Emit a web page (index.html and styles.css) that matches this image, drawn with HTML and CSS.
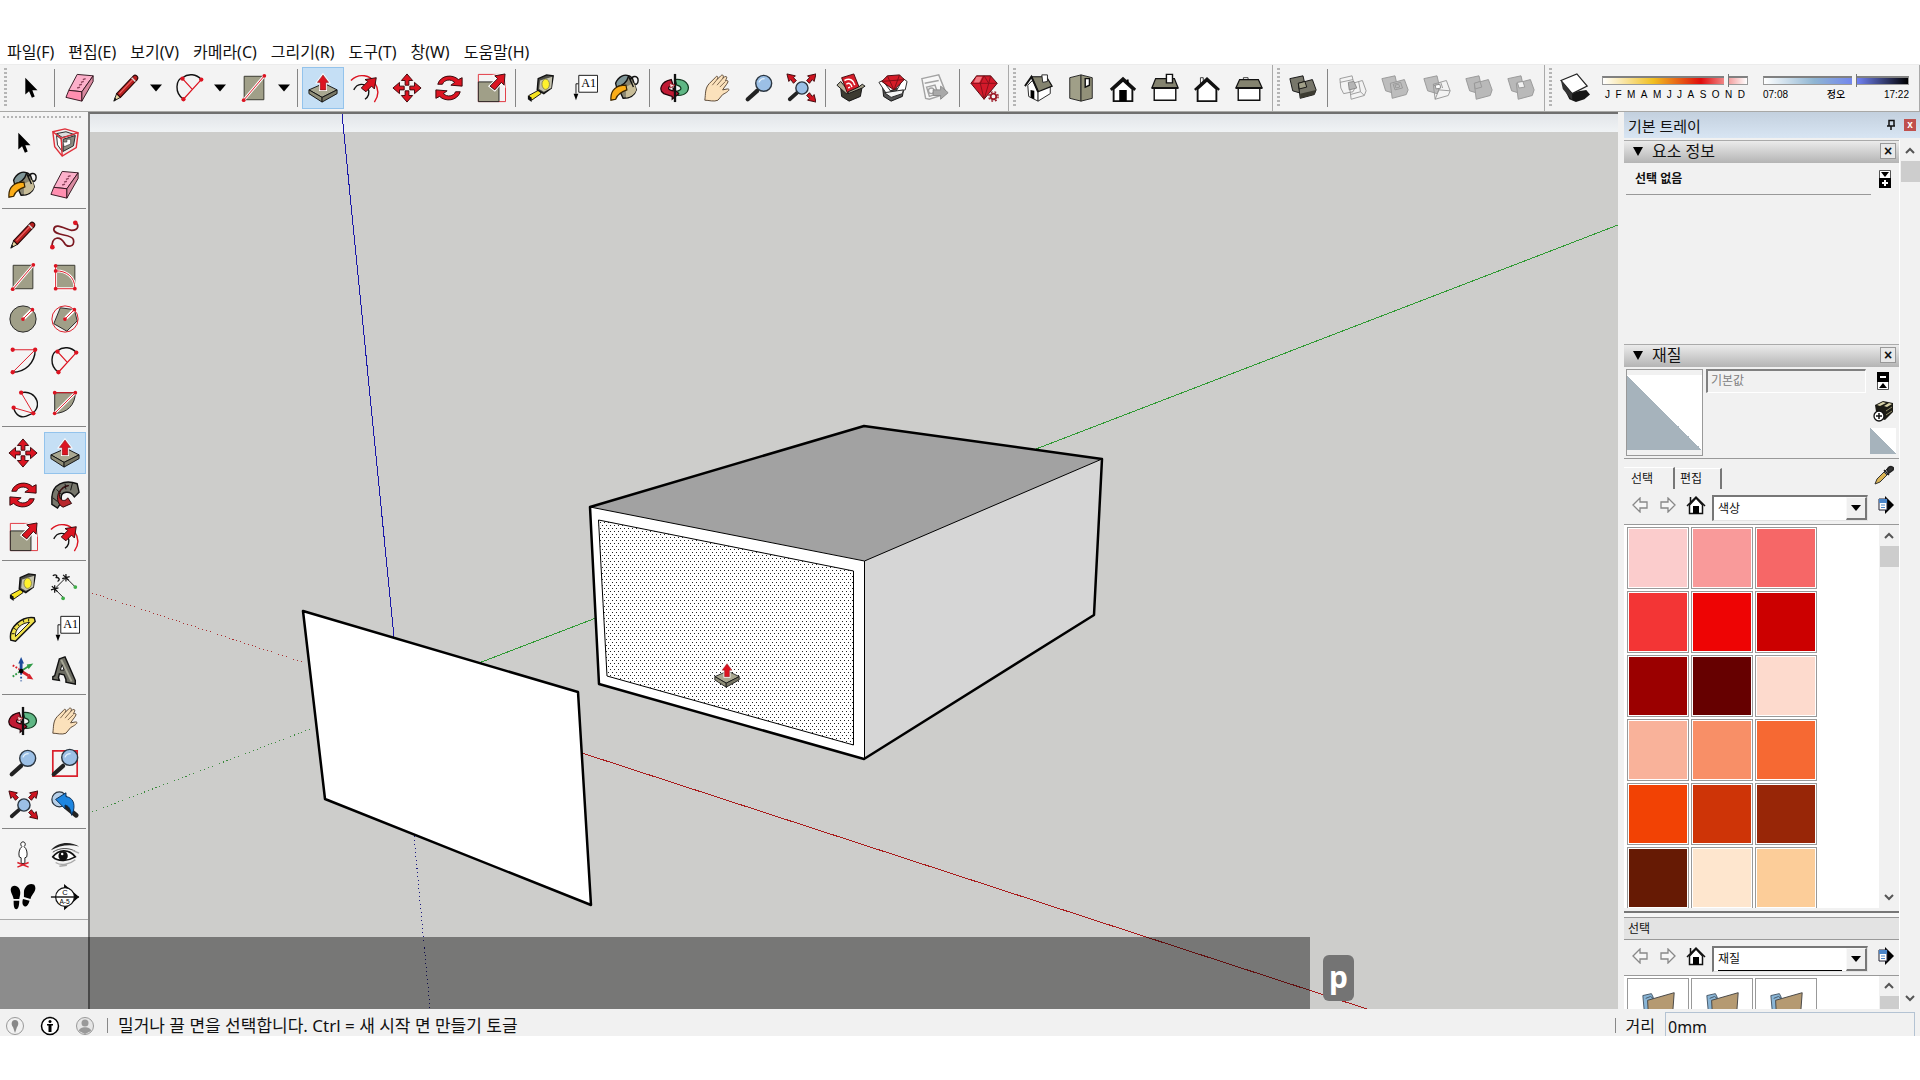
FILE: index.html
```html
<!DOCTYPE html>
<html lang="ko">
  <head>
    <meta charset="utf-8">
    <title>SketchUp</title>
    <link rel="stylesheet" href="styles.css">
  </head>
  <body>
    <!-- icon set -->
    <svg class="defs" width="0" height="0" aria-hidden="true">
      <defs>
        <symbol id="i-select" viewBox="0 0 32 32"><path d="M11 5V23L15 19.500L18 26.500L21 25L18.500 18.500H24Z" fill="#000"/></symbol>
        <symbol id="i-component" viewBox="0 0 32 32"><path d="M3 4L16 1L30 5L28 21L13 30L5 20Z" fill="#eee"/><path d="M14 12L27 8L25 19L14 25Z" fill="#8a8a80" stroke="#222"/><path d="M7 6L17 4L26 7L13 10Z" fill="#ddd" stroke="#222"/><path d="M7 8L12 12L13 25L8 18Z" fill="#fff" stroke="#222"/><path d="M14 15H18V12H22V17L15 20Z" fill="#fff" stroke="#222" stroke-width=".6"/><path d="M3 4L16 1L30 5L28 21L13 30L5 20ZM3 4L12 11L30 5M12 11L13 30" fill="none" stroke="#e0303a" stroke-width="1.500"/></symbol>
        <symbol id="i-paint" viewBox="0 0 32 32"><path d="M10 8C13 2 21 1 24 6L28 18C26 25 20 27 14 27L8 14Z" fill="#8a8672" stroke="#111" stroke-width="1.500"/><path d="M17 15L26 10L28 18C26 23 21 26 17 26Z" fill="#c8bd98"/><path d="M6 11C9 3 16 1 20 3C18 10 13 14 7 15Z" fill="#7f9698" stroke="#111" stroke-width="1.500"/><path d="M22 7C24 2 30 3 30 8C30 12 27 13 26 11M20 4L25 15" fill="none" stroke="#111" stroke-width="1.500"/><path d="M17 13C8 13 0 17 1 29L6 28C8 22 13 20 18 18Z" fill="#fbad18" stroke="#3a2500" stroke-width="1.300"/></symbol>
        <symbol id="i-eraser" viewBox="0 0 32 32"><path d="M13 1.500L30 3L18 20L4 18.500Z" fill="#fcb0ca" stroke="#30151e"/><path d="M4 18.500L18 20V30L1 26Z" fill="#ff8fb0" stroke="#30151e"/><path d="M30 3V9L18 30V20Z" fill="#d98aa0" stroke="#30151e"/><path d="M13 16L16 15M15 13L18 12M17 10L20 9M19 7L22 6" stroke="#8a4058" stroke-width="1.500"/></symbol>
        <symbol id="i-pencil" viewBox="0 0 32 32"><path d="M3 30L6 22L10 26Z" fill="#e8d5a0" stroke="#111"/><path d="M3 30L4 26L6 28Z" fill="#111"/><path d="M6 22L24 3C26 1 30 4 28 7L10 26Z" fill="#b8201f" stroke="#2a0808" stroke-width="1.200"/><path d="M22 5L26 9" stroke="#ddd" stroke-width="1.500"/><path d="M9 22L23 7" stroke="#e66" stroke-width="1.200"/></symbol>
        <symbol id="i-free" viewBox="0 0 32 32"><path d="M2 30C2 16 11 18 15 24C18 30 27 29 25 21C23 14 5 18 4 10C5 2 17 10 23 11C31 11 31 5 27 3" fill="none" stroke="#7b1820" stroke-width="1.800"/><circle cx="2.500" cy="29" r="2.500" fill="#dc1421"/><circle cx="27" cy="3" r="2.500" fill="#dc1421"/></symbol>
        <symbol id="i-rect" viewBox="0 0 32 32"><path d="M5.500 3.500H26.500V28.500H5.500Z" fill="#a09f88" stroke="#33332b"/><path d="M5 29L27 3" stroke="#fff" stroke-width="3"/><path d="M5 29L27 3" stroke="#dc1421"/><circle cx="5" cy="29" r="2" fill="#dc1421"/><circle cx="27" cy="3" r="2" fill="#dc1421"/></symbol>
        <symbol id="i-rrect" viewBox="0 0 32 32"><path d="M6 3.500H26.500V28.500H6Z" fill="#a09f88" stroke="#33332b"/><path d="M6 4V28.500H26.500C27 16 17 9 6 9.500" fill="none" stroke="#fff" stroke-width="3"/><path d="M6 4V28.500H26.500C27 16 17 9 6 9.500" fill="none" stroke="#dc1421"/><g fill="#dc1421"><circle cx="6" cy="4" r="2"/><circle cx="6" cy="9.500" r="2"/><circle cx="6" cy="28.500" r="2"/><circle cx="26.500" cy="28.500" r="2"/></g></symbol>
        <symbol id="i-circle" viewBox="0 0 32 32"><circle cx="16" cy="16" r="14" fill="#a09f88" stroke="#222"/><path d="M16 16L26 6" stroke="#fff" stroke-width="4"/><path d="M16 16L26 6" stroke="#dc1421"/><circle cx="16" cy="16" r="2" fill="#dc1421"/><circle cx="26" cy="6" r="2" fill="#dc1421"/></symbol>
        <symbol id="i-poly" viewBox="0 0 32 32"><path d="M11 4L26 6L29 18L18 29L4 21Z" fill="#a09f88" stroke="#222"/><circle cx="16" cy="16" r="14" fill="none" stroke="#dc1421"/><path d="M16 16L26 6" stroke="#fff" stroke-width="4"/><path d="M16 16L26 6" stroke="#dc1421"/><circle cx="16" cy="16" r="2" fill="#dc1421"/><circle cx="26" cy="6" r="2" fill="#dc1421"/></symbol>
        <symbol id="i-arc1" viewBox="0 0 32 32"><path d="M29 4C29 18 18 28 5 28" fill="none" stroke="#111" stroke-width="1.500"/><path d="M5 4H29L5 28" fill="none" stroke="#dc1421"/><g fill="#dc1421"><circle cx="5" cy="4" r="2.300"/><circle cx="29" cy="4" r="2.300"/><circle cx="5" cy="28" r="2.300"/></g></symbol>
        <symbol id="i-arc2" viewBox="0 0 32 32"><path d="M9 28C-1 21 1 7 8 5C14 0 23 1 28 7" fill="none" stroke="#111" stroke-width="1.500"/><path d="M8 6L18 17M28 7L9 28" fill="none" stroke="#dc1421" stroke-width="1.300"/><g fill="#dc1421"><circle cx="8" cy="6" r="2.300"/><circle cx="28" cy="7" r="2.300"/><circle cx="9" cy="28" r="2.300"/></g></symbol>
        <symbol id="i-arc3" viewBox="0 0 32 32"><path d="M14 5C31 1 39 23 22 29C15 33 8 30 6 21" fill="none" stroke="#111" stroke-width="1.500"/><path d="M14 5L27 27L6 21" fill="none" stroke="#dc1421"/><g fill="#dc1421"><circle cx="14" cy="5" r="2.300"/><circle cx="27" cy="27" r="2.300"/><circle cx="6" cy="21" r="2.300"/></g></symbol>
        <symbol id="i-pie" viewBox="0 0 32 32"><path d="M5 5H27C27 18 18 27 5 27Z" fill="#a09f88" stroke="#222"/><path d="M5 27L27 5" stroke="#fff" stroke-width="3"/><path d="M5 5H27L5 27" fill="none" stroke="#dc1421"/><g fill="#dc1421"><circle cx="5" cy="5" r="2"/><circle cx="27" cy="5" r="2"/><circle cx="5" cy="27" r="2"/></g></symbol>
        <symbol id="i-move" viewBox="0 0 32 32"><g fill="#dc1421" stroke="#3d080b"><path id="mv" d="M16 1L22 8H18V13H14V8H10Z"/><use href="#mv" transform="rotate(90 16 16)"/><use href="#mv" transform="rotate(180 16 16)"/><use href="#mv" transform="rotate(270 16 16)"/></g></symbol>
        <symbol id="i-push" viewBox="0 0 32 32"><path d="M1 18L17 11L31 18L15 26Z" fill="#a9a891" stroke="#111"/><path d="M1 18L15 26V31L1 22Z" fill="#8f8e78" stroke="#111"/><path d="M15 26L31 18V22L15 31Z" fill="#777664" stroke="#111"/><path d="M16 2L22 10H19V18H13V10H10Z" fill="#dc1421" stroke="#fff" stroke-width="2.500"/><path d="M16 2L22 10H19V18H13V10H10Z" fill="#dc1421" stroke="#6d0a10" stroke-width=".5"/></symbol>
        <symbol id="i-rotate" viewBox="0 0 32 32"><g fill="#dc1421" stroke="#30080a"><path id="rt" d="M4 12C7 2 20 1 26 7L30 5L30 14L18 13L22 10C18 6 11 7 9 12Z"/><use href="#rt" transform="rotate(180 16 16)"/></g></symbol>
        <symbol id="i-follow" viewBox="0 0 32 32"><path d="M2 18C3 5 15 -1 29 4L31 13L26 18C21 10 12 13 12 18L12 24L8 30L2 26Z" fill="#77776c" stroke="#111" stroke-width="1.500"/><path d="M3 19L8 23M7 10L12 15M16 4L17 10M24 3L22 11" stroke="#111"/><path d="M20 6C12 8 8 14 11 20C14 23 17 22 19 19L23 25L14 29C8 26 7 20 9 14C12 8 16 6 20 6Z" fill="#b8262b" stroke="#220406"/></symbol>
        <symbol id="i-scale" viewBox="0 0 32 32"><path d="M2.500 1.500H31.500V30.500H2.500Z" fill="none" stroke="#e0303a"/><path d="M2.500 9.500H24.500V30.500H2.500Z" fill="#a09f88" stroke="#222"/><path d="M31 1L30 13L27 10L20 18L15 14L23 6L20 3Z" fill="#dc1421" stroke="#fff" stroke-width="3"/><path d="M31 1L30 13L27 10L20 18L15 14L23 6L20 3Z" fill="#dc1421" stroke="#30080a"/></symbol>
        <symbol id="i-offset" viewBox="0 0 32 32"><path d="M1 8C10 -1 22 3 26 10C31 17 31 24 26 31" fill="none" stroke="#dc1421" stroke-width="1.500"/><path d="M4 18C8 10 16 11 19 16C22 21 19 26 16 28" fill="none" stroke="#111" stroke-width="1.500"/><path d="M28 5L26 17L23 14L17 20L12 16L19 9L16 7Z" fill="#dc1421" stroke="#30080a"/></symbol>
        <symbol id="i-tape" viewBox="0 0 32 32"><path d="M3 24L14 18L16 22L6 29Z" fill="#f6e421" stroke="#111"/><path d="M2 24L6 26L6 31L2 28Z" fill="#111"/><path d="M13 6L22 2L29 3L27 16L19 22L12 18Z" fill="#4b4b45" stroke="#111" stroke-width="1.500"/><path d="M15 8L28 4L27 16L19 20L14 17Z" fill="#c4c2ae"/><ellipse cx="21" cy="12" rx="4" ry="5.500" fill="#fff22c" stroke="#8b8750"/></symbol>
        <symbol id="i-dim" viewBox="0 0 32 32"><path d="M5 18L17 6M5 18L14 27M17 6L26 15" stroke="#111" fill="none"/><path d="M2 15L8 21M14 3L20 9M5 14V22M1 19L9 17M17 2V10M13 7L21 5" stroke="#111" stroke-width="1.300"/><path d="M3 4C6 2 9 4 6 6C10 5 11 9 8 10" fill="none" stroke="#111" stroke-width="1.500"/><circle cx="14" cy="28" r="2" fill="#3fae49"/><circle cx="27" cy="16" r="2" fill="#3fae49"/></symbol>
        <symbol id="i-protractor" viewBox="0 0 32 32"><path d="M3 28C0 14 15 2 28 4L29 8L8 29Z" fill="#efe04b" stroke="#111" stroke-width="1.500"/><path d="M8 24C7 16 15 9 23 9Z" fill="#f3f3f3" stroke="#111"/><path d="M4 21L7 21M6 15L9 17M10 10L12 13M16 6L17 9M22 5L22 8" stroke="#111"/></symbol>
        <symbol id="i-text" viewBox="0 0 32 32"><path d="M11.500 2.500H31.500V20.500H11.500Z" fill="#fff" stroke="#111"/><text x="14" y="15" font-family="Liberation Serif" font-size="13">A1</text><path d="M11 11.500H8.500V22" fill="none" stroke="#111"/><path d="M6 22H11L8.500 29Z"/></symbol>
        <symbol id="i-axes" viewBox="0 0 32 32"><path d="M14 16V7" stroke="#1c4c9c" stroke-width="3"/><path d="M14 1L17 8H11Z" fill="#1c4c9c"/><path d="M14 16L22 11" stroke="#2f9b46" stroke-width="2"/><path d="M27 8L22 14L20 9Z" fill="#2f9b46"/><path d="M14 16L22 21" stroke="#d5202a" stroke-width="3"/><path d="M27 25L20 24L23 19Z" fill="#d5202a"/><path d="M5 10L12 14" stroke="#d5202a" stroke-width="2" stroke-dasharray="2 1.500"/><path d="M5 22L12 17" stroke="#2f9b46" stroke-width="2" stroke-dasharray="2 1.500"/><path d="M14 18V27" stroke="#1c4c9c" stroke-width="2" stroke-dasharray="2 2"/><circle cx="14" cy="16" r="2.500"/></symbol>
        <symbol id="i-3dtext" viewBox="0 0 32 32"><path d="M10 3L16 1L27 26V30L17 28V25L15 20L10 19L9 23L10 26L3 25V22L5 21Z" fill="#6c6c62" stroke="#111" stroke-width="1.500"/><path d="M13 9L15 15H11Z" fill="#fff" stroke="#111"/><path d="M12 4L23 27" stroke="#a7a797" stroke-width="2"/></symbol>
        <symbol id="i-orbit" viewBox="0 0 32 32"><path d="M16 7C27 6 33 13 29 20C26 24 21 24 19 24V19C24 18 23 14 18 13Z" fill="#5fb785" stroke="#12391f" stroke-width="1.300"/><path d="M12 7C1 9 -2 18 4 22L13 25V28L20 22L14 16V19C8 18 7 15 14 13Z" fill="#c01a33" stroke="#22050a" stroke-width="1.300"/><path d="M16 1V31" stroke="#111" stroke-width="2.500"/><path d="M10 11L16 13L11 16Z" fill="#f5dfdf" stroke="#a01a25"/></symbol>
        <symbol id="i-pan" viewBox="0 0 32 32"><path d="M3 29C4 22 3 16 8 11L14 5C16 2 18 4 16 7L20 3C22 1 24 3 22 6L24 4C27 3 27 5 25 8L26 8C29 8 28 10 24 15L22 18L27 17C31 17 28 20 22 23L17 29C13 31 7 29 3 29Z" fill="#fbe1bb" stroke="#554332" stroke-width="1"/><path d="M16 7L11 13M22 6L16 13M25 9L19 15" stroke="#7a624a"/></symbol>
        <symbol id="i-zoom" viewBox="0 0 32 32"><path d="M4 28L14 19" stroke="#222" stroke-width="4.500" stroke-linecap="round"/><path d="M14 18L17 16" stroke="#222" stroke-width="2"/><circle cx="21" cy="11" r="8.500" fill="#9cc0e6" stroke="#2a3540" stroke-width="1.500"/><path d="M16 10C17 7 19 6 22 6" fill="none" stroke="#e3f0fb" stroke-width="1.500"/></symbol>
        <symbol id="i-zoomwin" viewBox="0 0 32 32"><path d="M3 3H29V30H3Z" fill="none" stroke="#d9202c" stroke-width="1.800"/><path d="M4 28L14 19" stroke="#222" stroke-width="4.500" stroke-linecap="round"/><circle cx="21" cy="10" r="8.500" fill="#9cc0e6" stroke="#2a3540" stroke-width="1.500"/><path d="M16 10C17 7 19 6 22 6" fill="none" stroke="#e3f0fb" stroke-width="1.500"/></symbol>
        <symbol id="i-extents" viewBox="0 0 32 32"><path d="M4 28L12 21" stroke="#222" stroke-width="4" stroke-linecap="round"/><circle cx="17" cy="16" r="6.500" fill="#9cc0e6" stroke="#2a3540" stroke-width="1.500"/><g fill="#cf1420" stroke="#3d080b"><path d="M1 1L10 3L8 5L11 8L8 11L5 7L3 9Z"/><path d="M32 1L30 9L28 7L25 11L22 8L25 5L23 3Z"/><path d="M32 31L23 29L25 27L22 24L25 21L28 25L30 23Z"/></g></symbol>
        <symbol id="i-prev" viewBox="0 0 32 32"><path d="M17 18L28 27" stroke="#222" stroke-width="5" stroke-linecap="round"/><circle cx="10" cy="10" r="8" fill="#b6cfe8" stroke="#2a3540" stroke-width="1.300"/><path d="M6 10L17 3V7C24 8 27 14 25 22L23 27C22 20 20 17 16 16V20Z" fill="#1e86e0" stroke="#082b52"/></symbol>
        <symbol id="i-position" viewBox="0 0 32 32"><path d="M16 2C19 2 19 6 17 7C20 9 21 14 20 18L18 19V25H14V19L12 18C11 14 12 9 15 7C13 6 13 2 16 2Z" fill="#fff" stroke="#111"/><path d="M10 29L22 24M10 24L22 29" stroke="#d9202c" stroke-width="1.500"/></symbol>
        <symbol id="i-eye" viewBox="0 0 32 32"><path d="M1 11C8 2 22 1 31 7C20 4 10 6 1 11Z" fill="#222"/><path d="M3 18C9 10 20 9 27 18C20 22 9 24 3 18Z" fill="#fff" stroke="#111" stroke-width="1.800"/><circle cx="14" cy="17" r="5" fill="#111"/><circle cx="13" cy="15" r="1.300" fill="#fff"/><path d="M3 13C10 8 20 8 27 12" fill="none" stroke="#444"/><path d="M6 24C12 28 21 26 27 21M10 28L18 27M24 11L31 14" stroke="#aaa" stroke-width="1.500" fill="none"/></symbol>
        <symbol id="i-walk" viewBox="0 0 32 32"><path d="M4 5C9 2 14 7 13 13L12 18L6 18C5 13 1 9 4 5ZM6 20L12 20C12 25 11 29 9 29C6 29 6 24 6 20Z"/><path d="M28 3C22 0 17 6 17 11L17 16L24 18C25 13 32 9 28 3ZM16 18L23 20C22 24 20 27 18 26C15 25 15 21 16 18Z"/></symbol>
        <symbol id="i-section" viewBox="0 0 32 32"><path d="M15 2L23 9L31 16L23 23L15 30Z"/><circle cx="16" cy="16" r="10" fill="#fff" stroke="#111" stroke-width="1.300"/><path d="M1 16H31" stroke="#111" stroke-width="1.500"/><text x="13" y="14" font-family="Liberation Sans" font-size="8">C</text><text x="10" y="23" font-family="Liberation Sans" font-size="7">A-5</text></symbol>
        <symbol id="i-ware" viewBox="0 0 32 32"><path d="M5 16L13 19L28 14L26 25L14 30L6 25Z" fill="#3c3a30" stroke="#111"/><path d="M1 13L5 9L14 20L11 22Z" fill="#b5b09a" stroke="#111"/><path d="M6 5L19 1L25 16L12 21Z" fill="#d51c28" stroke="#43080c"/><path d="M9 8C15 5 19 8 20 13M11 12C14 10 16 11 17 15M13 16L15 15" fill="none" stroke="#fff" stroke-width="1.600"/><path d="M13 22L28 16L31 14L28 12L24 15L13 20Z" fill="#a5a18b" stroke="#111"/></symbol>
        <symbol id="i-extw" viewBox="0 0 32 32"><path d="M5 16L13 19L28 14L26 25L14 30L6 25Z" fill="#555" stroke="#111"/><path d="M1 10L5 8L14 20L9 22Z" fill="#fff" stroke="#222"/><path d="M31 9L27 6L19 20L29 18Z" fill="#fff" stroke="#222"/><path d="M4 9L10 3L23 2L28 7L17 18Z" fill="#d51c28" stroke="#43080c"/><path d="M4 9L28 7M10 3L17 18L23 2" fill="none" stroke="#7d0e15"/><path d="M7 21L27 18L26 22L14 26Z" fill="#f4f4f4" stroke="#222"/></symbol>
        <symbol id="i-layout" viewBox="0 0 32 32"><g fill="#f7f7f7" stroke="#a3a3a3" stroke-width="1.500"><path d="M2 6L20 2L28 22L10 28L6 27Z"/><path d="M5 11L20 8M7 15L16 13L19 22L10 25Z"/><circle cx="12" cy="19" r="3"/></g><path d="M14 18H22V14L30 21L22 28V24H14Z" fill="#a9a9a9" stroke="#888"/></symbol>
        <symbol id="i-ruby" viewBox="0 0 32 32"><path d="M1 11L7 3H22L29 11L15 28Z" fill="#d3192a" stroke="#4b080e"/><path d="M1 11H29M7 3L11 11L15 28L20 11L22 3M11 11L15 3L20 11" fill="none" stroke="#84101a"/><path d="M7 4L13 4L10 10L4 10Z" fill="#f27780"/><circle cx="25" cy="25" r="3" fill="#f2f2f2" stroke="#9b1b28" stroke-width="2"/><circle cx="25" cy="25" r="5" fill="none" stroke="#9b1b28" stroke-width="1.500" stroke-dasharray="2 2"/></symbol>
        <symbol id="i-iso" viewBox="0 0 32 32"><path d="M4 13L9 8L15 17V30L5 25Z" fill="#fff" stroke="#222"/><path d="M15 19L28 12V22L15 30Z" fill="#fff" stroke="#222"/><path d="M8 4L24 4L30 14L15 20Z" fill="#84836f" stroke="#111" stroke-width="1.300"/><path d="M1 14L8 4L15 20" fill="none" stroke="#111" stroke-width="2"/><path d="M7 18L11 19V28L7 26Z"/><path d="M19 2H25V9L20 10Z" fill="#fff" stroke="#222"/></symbol>
        <symbol id="i-top" viewBox="0 0 32 32"><path d="M4 5L16 2V30L4 27Z" fill="#a09f88" stroke="#222"/><path d="M16 2L28 5V27L16 30Z" fill="#929179" stroke="#222"/><path d="M20.500 6H25V13L20.500 15Z" fill="#fff" stroke="#111" stroke-width="1.500"/></symbol>
        <symbol id="i-front" viewBox="0 0 32 32"><path d="M6 17L16 8L26 17V30H6Z" fill="#fff" stroke="#111" stroke-width="2"/><path d="M3 18L16 6L29 18" fill="none" stroke="#111" stroke-width="3"/><path d="M12 18H20V30H12ZM20 7H22V12H20Z"/></symbol>
        <symbol id="i-right" viewBox="0 0 32 32"><path d="M4.500 16H27.500V29H4.500Z" fill="#fff" stroke="#111" stroke-width="1.500"/><path d="M6 6H26L30 16H2Z" fill="#84836f" stroke="#111" stroke-width="1.300"/><path d="M2 16H30" stroke="#111" stroke-width="2"/><path d="M17.500 1.500H24V10.500H17.500Z" fill="#fff" stroke="#111" stroke-width="1.500"/></symbol>
        <symbol id="i-back" viewBox="0 0 32 32"><path d="M9 5H12V12H9Z" fill="#fff" stroke="#333"/><path d="M6 17L16 8L26 17V30H6Z" fill="#fff" stroke="#111" stroke-width="2"/><path d="M3 18L16 6L29 18" fill="none" stroke="#111" stroke-width="2.500"/></symbol>
        <symbol id="i-left" viewBox="0 0 32 32"><path d="M10 5H15V7H10Z" fill="#fff" stroke="#333"/><path d="M4.500 16H27.500V29H4.500Z" fill="#fff" stroke="#111" stroke-width="1.500"/><path d="M6 7H26L30 16H2Z" fill="#84836f" stroke="#111" stroke-width="1.300"/><path d="M2 16H30" stroke="#111" stroke-width="2"/></symbol>
        <symbol id="i-shell" viewBox="0 0 32 32"><path d="M2 6L16 3L19 16L15 22L5 19Z" fill="#77766a" stroke="#111"/><path d="M11 11L26 7L30 18L28 23L13 27Z" fill="#77766a" stroke="#111"/><path d="M13 22L30 18L28 23L13 27Z" fill="#3c3b31"/><path d="M11 11L18 9L20 15L12 17Z" fill="#a09f88" stroke="#111"/></symbol>
        <symbol id="i-s1" viewBox="0 0 32 32"><g fill="none" stroke="#999"><path d="M2 6L15 3L18 16L16 20L6 22L3 16Z"/><path d="M12 12L26 8L30 19L28 24L14 28ZM2 10L16 7M22 9L24 20L13 23M24 20L28 24"/></g><path d="M11 10L17 9L20 16L12 18Z" fill="#b5b5b5" stroke="#888"/></symbol>
        <symbol id="i-s2" viewBox="0 0 32 32"><g fill="#bdbdbd" stroke="#979797"><path d="M2 6L16 3L19 16L16 22L6 19Z"/><path d="M11 11L26 7L30 18L28 23L13 27Z"/><path d="M14 12L22 10L24 16L16 18ZM16 13L20 12L21 15L17 16Z"/></g></symbol>
        <symbol id="i-s3" viewBox="0 0 32 32"><path d="M2 6L16 3L19 16L16 22L6 19Z" fill="#bdbdbd" stroke="#979797"/><path d="M12 12L26 8L30 19L28 24L14 28ZM12 12L18 18L30 19M18 18L14 28M20 10L22 16" fill="none" stroke="#979797"/><path d="M14 13L19 12L20 16L15 17Z" fill="#fff" stroke="#888"/></symbol>
        <symbol id="i-s4" viewBox="0 0 32 32"><g fill="#b9b9b9" stroke="#979797"><path d="M2 6L16 3L19 16L16 22L6 19Z"/><path d="M11 11L26 7L30 18L28 24L13 28Z"/><path d="M11 11L17 9L19 15L12 17Z"/></g></symbol>
        <symbol id="i-s5" viewBox="0 0 32 32"><g fill="#b9b9b9" stroke="#979797"><path d="M2 6L16 3L19 16L16 22L6 19Z"/><path d="M11 11L26 7L30 18L28 24L13 28Z"/><path d="M12 10L18 9L20 15L14 16Z" fill="#f3f3f3"/></g></symbol>
        <symbol id="i-shadow" viewBox="0 0 32 32"><path d="M2 12L10 28L17 31L26 28L32 23L28 18L16 20Z" fill="#151515"/><path d="M1 8L18 1L29 14L13 22Z" fill="#fff" stroke="#222" stroke-width="1.300"/><path d="M1 8L13 22L13 29L3 17Z" fill="#333"/></symbol>
        <symbol id="i-prevarr" viewBox="0 0 16 16"><path d="M1 8L8 1V5H15V11H8V15Z" fill="#f6f6f6" stroke="#888" stroke-width="1.300"/></symbol>
        <symbol id="i-nextarr" viewBox="0 0 16 16"><path d="M15 8L8 1V5H1V11H8V15Z" fill="#f6f6f6" stroke="#888" stroke-width="1.300"/></symbol>
        <symbol id="i-home" viewBox="0 0 20 20"><path d="M3.500 10V18.500H16.500V10L10 3Z" fill="#fff" stroke="#111" stroke-width="1.500"/><path d="M1 11L10 2L19 11M4.500 7V2" fill="none" stroke="#111" stroke-width="1.500"/><path d="M7 11H13V18.500H7Z"/></symbol>
        <symbol id="i-details" viewBox="0 0 16 20"><path d="M7 1L16 10L7 19Z"/><path d="M1 4H9V15H1Z" fill="#fff" stroke="#223"/><path d="M1 4H9V8H1Z" fill="#4b86c9"/><path d="M3 10H7M3 12.500H7" stroke="#4b86c9"/></symbol>
        <symbol id="i-expand" viewBox="0 0 12 18"><path d="M.5.500H11.500V17.500H.5Z" fill="#fff" stroke="#555"/><path d="M2 2H10L6 7Z"/><path d="M0 8H12V18H0Z"/><path d="M3 13H9M6 10V16" stroke="#fff" stroke-width="2"/></symbol>
        <symbol id="i-collapse" viewBox="0 0 12 18"><path d="M.5.500H11.500V17.500H.5Z" fill="#fff" stroke="#555"/><path d="M0 0H12V10H0Z"/><path d="M3 5H9" stroke="#fff" stroke-width="2"/><path d="M2 16H10L6 11Z"/></symbol>
        <symbol id="i-create" viewBox="0 0 22 22"><path d="M3 5L11 1L21 3V12L13 20L5 18Z" fill="#1c1b15"/><path d="M5 5L11 2L14 3L8 6ZM12 6L17 3L20 4L15 7Z" fill="#d8d2a8"/><path d="M14 11L20 7M14 15L20 11" stroke="#8d8966"/><circle cx="7" cy="16" r="5" fill="#fff" stroke="#111" stroke-width="1.300"/><path d="M4 16H10M7 13V19" stroke="#111" stroke-width="1.500"/></symbol>
        <symbol id="i-dropper" viewBox="0 0 20 20"><path d="M1 19L3 14L10 7L13 10L6 17Z" fill="#d9b354" stroke="#333"/><path d="M10 7L13 4L16 7L13 10Z" fill="#ddd" stroke="#333"/><path d="M10 5L15 10M13 5C15 0 21 1 19 5L15 8Z" fill="#333" stroke="#222" stroke-width="1.500"/></symbol>
        <symbol id="i-folder" viewBox="0 0 40 30"><path d="M3 4L12 2L14 6L6 26H5Z" fill="#89b5d6" stroke="#456"/><path d="M8 9L36 1L34 28H9Z" fill="#b59a72" stroke="#444"/><path d="M6 7L11 5L14 7" fill="none" stroke="#456"/></symbol>
        <symbol id="i-up" viewBox="0 0 10 10"><path d="M1 7L5 3L9 7" fill="none" stroke="#555" stroke-width="2"/></symbol>
        <symbol id="i-down" viewBox="0 0 10 10"><path d="M1 3L5 7L9 3" fill="none" stroke="#555" stroke-width="2"/></symbol>
        <symbol id="i-tri" viewBox="0 0 10 10"><path d="M0 2H10L5 8Z"/></symbol>
        <symbol id="i-fold" viewBox="0 0 10 10"><path d="M0 1H10L5 10Z"/></symbol>
        <pattern id="stipple" width="4" height="6" patternUnits="userSpaceOnUse"><path d="M0 0H1V1H0ZM2 3H3V4H2Z" fill="#222" shape-rendering="crispEdges"/></pattern>
      </defs>
    </svg>

    <nav class="menubar">
      <button>파일(F)</button>
      <button>편집(E)</button>
      <button>보기(V)</button>
      <button>카메라(C)</button>
      <button>그리기(R)</button>
      <button>도구(T)</button>
      <button>창(W)</button>
      <button>도움말(H)</button>
    </nav>

    <header class="toolbars">
      <div class="toolbar">
        <button class="tool" aria-label="선택"><svg><use href="#i-select"/></svg></button>
        <span class="sep"></span>
        <button class="tool" aria-label="지우개"><svg><use href="#i-eraser"/></svg></button>
        <div class="splits">
          <div class="split"><button class="tool" aria-label="선"><svg><use href="#i-pencil"/></svg></button><button class="drop" aria-label="선 메뉴"><svg><use href="#i-tri"/></svg></button></div>
          <div class="split"><button class="tool" aria-label="호"><svg><use href="#i-arc2"/></svg></button><button class="drop" aria-label="호 메뉴"><svg><use href="#i-tri"/></svg></button></div>
          <div class="split"><button class="tool" aria-label="직사각형"><svg><use href="#i-rect"/></svg></button><button class="drop" aria-label="도형 메뉴"><svg><use href="#i-tri"/></svg></button></div>
        </div>
        <span class="sep"></span>
        <button class="tool active" aria-label="밀기/끌기"><svg><use href="#i-push"/></svg></button>
        <button class="tool" aria-label="오프셋"><svg><use href="#i-offset"/></svg></button>
        <button class="tool" aria-label="이동"><svg><use href="#i-move"/></svg></button>
        <button class="tool" aria-label="회전"><svg><use href="#i-rotate"/></svg></button>
        <button class="tool" aria-label="배율"><svg><use href="#i-scale"/></svg></button>
        <span class="sep"></span>
        <button class="tool" aria-label="줄자"><svg><use href="#i-tape"/></svg></button>
        <button class="tool" aria-label="텍스트"><svg><use href="#i-text"/></svg></button>
        <button class="tool" aria-label="페인트통"><svg><use href="#i-paint"/></svg></button>
        <span class="sep"></span>
        <button class="tool" aria-label="궤도"><svg><use href="#i-orbit"/></svg></button>
        <button class="tool" aria-label="이동 보기"><svg><use href="#i-pan"/></svg></button>
        <button class="tool" aria-label="확대/축소"><svg><use href="#i-zoom"/></svg></button>
        <button class="tool" aria-label="범위 확대"><svg><use href="#i-extents"/></svg></button>
        <span class="sep"></span>
        <button class="tool" aria-label="3D Warehouse"><svg><use href="#i-ware"/></svg></button>
        <button class="tool" aria-label="Extension Warehouse"><svg><use href="#i-extw"/></svg></button>
        <button class="tool" aria-label="LayOut"><svg><use href="#i-layout"/></svg></button>
        <span class="sep"></span>
        <button class="tool" aria-label="확장 프로그램 관리자"><svg><use href="#i-ruby"/></svg></button>
      </div>
      <div class="toolbar">
        <button class="tool" aria-label="등각 투영"><svg><use href="#i-iso"/></svg></button>
        <button class="tool" aria-label="맨 위"><svg><use href="#i-top"/></svg></button>
        <button class="tool" aria-label="앞"><svg><use href="#i-front"/></svg></button>
        <button class="tool" aria-label="오른쪽"><svg><use href="#i-right"/></svg></button>
        <button class="tool" aria-label="뒤"><svg><use href="#i-back"/></svg></button>
        <button class="tool" aria-label="왼쪽"><svg><use href="#i-left"/></svg></button>
      </div>
      <div class="toolbar">
        <button class="tool" aria-label="외부 셸"><svg><use href="#i-shell"/></svg></button>
        <span class="sep"></span>
        <button class="tool" aria-label="교차"><svg><use href="#i-s1"/></svg></button>
        <button class="tool" aria-label="결합"><svg><use href="#i-s2"/></svg></button>
        <button class="tool" aria-label="빼기"><svg><use href="#i-s3"/></svg></button>
        <button class="tool" aria-label="자르기"><svg><use href="#i-s4"/></svg></button>
        <button class="tool" aria-label="분할"><svg><use href="#i-s5"/></svg></button>
      </div>
      <div class="toolbar shadows">
        <button class="tool" aria-label="그림자"><svg><use href="#i-shadow"/></svg></button>
        <div class="slider">
          <input class="range months" type="range" min="0" max="100" value="87" aria-label="날짜">
          <div class="ticks letters"><span>J</span><span>F</span><span>M</span><span>A</span><span>M</span><span>J</span><span>J</span><span>A</span><span>S</span><span>O</span><span>N</span><span>D</span></div>
        </div>
        <div class="slider">
          <input class="range hours" type="range" min="0" max="100" value="63" aria-label="시간">
          <div class="ticks"><span>07:08</span><span>정오</span><span>17:22</span></div>
        </div>
      </div>
    </header>

    <main class="workspace">
      <aside class="side">
        <div class="palette">
          <div class="grid">
            <button class="tool" aria-label="선택"><svg><use href="#i-select"/></svg></button>
            <button class="tool" aria-label="구성요소"><svg><use href="#i-component"/></svg></button>
            <button class="tool" aria-label="페인트통"><svg><use href="#i-paint"/></svg></button>
            <button class="tool" aria-label="지우개"><svg><use href="#i-eraser"/></svg></button>
          </div>
          <div class="grid">
            <button class="tool" aria-label="선"><svg><use href="#i-pencil"/></svg></button>
            <button class="tool" aria-label="자유형"><svg><use href="#i-free"/></svg></button>
            <button class="tool" aria-label="직사각형"><svg><use href="#i-rect"/></svg></button>
            <button class="tool" aria-label="회전 직사각형"><svg><use href="#i-rrect"/></svg></button>
            <button class="tool" aria-label="원"><svg><use href="#i-circle"/></svg></button>
            <button class="tool" aria-label="다각형"><svg><use href="#i-poly"/></svg></button>
            <button class="tool" aria-label="호"><svg><use href="#i-arc1"/></svg></button>
            <button class="tool" aria-label="2점 호"><svg><use href="#i-arc2"/></svg></button>
            <button class="tool" aria-label="3점 호"><svg><use href="#i-arc3"/></svg></button>
            <button class="tool" aria-label="파이"><svg><use href="#i-pie"/></svg></button>
          </div>
          <div class="grid">
            <button class="tool" aria-label="이동"><svg><use href="#i-move"/></svg></button>
            <button class="tool active" aria-label="밀기/끌기"><svg><use href="#i-push"/></svg></button>
            <button class="tool" aria-label="회전"><svg><use href="#i-rotate"/></svg></button>
            <button class="tool" aria-label="따라가기"><svg><use href="#i-follow"/></svg></button>
            <button class="tool" aria-label="배율"><svg><use href="#i-scale"/></svg></button>
            <button class="tool" aria-label="오프셋"><svg><use href="#i-offset"/></svg></button>
          </div>
          <div class="grid">
            <button class="tool" aria-label="줄자"><svg><use href="#i-tape"/></svg></button>
            <button class="tool" aria-label="치수"><svg><use href="#i-dim"/></svg></button>
            <button class="tool" aria-label="각도기"><svg><use href="#i-protractor"/></svg></button>
            <button class="tool" aria-label="텍스트"><svg><use href="#i-text"/></svg></button>
            <button class="tool" aria-label="축"><svg><use href="#i-axes"/></svg></button>
            <button class="tool" aria-label="3D 텍스트"><svg><use href="#i-3dtext"/></svg></button>
          </div>
          <div class="grid">
            <button class="tool" aria-label="궤도"><svg><use href="#i-orbit"/></svg></button>
            <button class="tool" aria-label="이동 보기"><svg><use href="#i-pan"/></svg></button>
            <button class="tool" aria-label="확대/축소"><svg><use href="#i-zoom"/></svg></button>
            <button class="tool" aria-label="확대/축소 창"><svg><use href="#i-zoomwin"/></svg></button>
            <button class="tool" aria-label="범위 확대"><svg><use href="#i-extents"/></svg></button>
            <button class="tool" aria-label="이전"><svg><use href="#i-prev"/></svg></button>
          </div>
          <div class="grid">
            <button class="tool" aria-label="카메라 배치"><svg><use href="#i-position"/></svg></button>
            <button class="tool" aria-label="둘러보기"><svg><use href="#i-eye"/></svg></button>
            <button class="tool" aria-label="걷기"><svg><use href="#i-walk"/></svg></button>
            <button class="tool" aria-label="단면"><svg><use href="#i-section"/></svg></button>
          </div>
        </div>
      </aside>

      <section class="viewport">
        <svg class="scene" viewBox="90 114 1528 895" preserveAspectRatio="xMinYMin slice">
          <defs>
            <linearGradient id="sky" x1="0" y1="0" x2="0" y2="1"><stop offset="0" stop-color="#e2e5e9"/><stop offset="1" stop-color="#f0f3f5"/></linearGradient>
          </defs>
          <rect x="90" y="114" width="1528" height="895" fill="#cdcdcb"/>
          <rect x="90" y="114" width="1528" height="18" fill="url(#sky)"/>
          <!-- axes -->
          <g fill="none" shape-rendering="crispEdges">
            <path d="M342 114L394 637" stroke="#1a18a8"/>
            <path d="M414 836L430 1009" stroke="#1a1880" stroke-dasharray="1 3"/>
            <path d="M479 663L596 618M1036 449L1618 225" stroke="#2f9a32"/>
            <path d="M92 812L313 728" stroke="#3c8a3e" stroke-dasharray="1 3"/>
            <path d="M582 753L1367 1009" stroke="#a81c1c"/>
            <path d="M92 593L305 663" stroke="#a83030" stroke-dasharray="1 3"/>
          </g>
          <!-- loose panel -->
          <path d="M303 611L578 692L591 905L325 799Z" fill="#fff" stroke="#000" stroke-width="2.500" stroke-linejoin="round"/>
          <!-- box -->
          <path d="M590 507L864 426L1102 459L865 561Z" fill="#a2a2a2"/>
          <path d="M865 561L1102 459L1094 615L865 760Z" fill="#d6d6d6"/>
          <path d="M590 507L865 561V760L599 684Z" fill="#fff"/>
          <path d="M598.500 520L853.500 571V745L607 676Z" fill="url(#stipple)" stroke="#000"/>
          <path d="M590 507L864.500 561L1102 459M864.500 561V760" fill="none" stroke="#000"/>
          <path d="M590 507L864 426L1102 459L1094 615L864 759L599 684Z" fill="none" stroke="#000" stroke-width="2.500" stroke-linejoin="round"/>
          <use href="#i-push" x="714" y="662" width="26" height="26"/>
        </svg>
      </section>

      <aside class="tray">
        <div class="tray-title">
          <span>기본 트레이</span>
          <button class="pin" aria-label="고정"><svg viewBox="0 0 10 12"><path d="M3 1.500H8V7H3ZM1 7H9M5 7V11" fill="none" stroke="#111" stroke-width="1.500"/></svg></button>
          <button class="tray-close" aria-label="닫기">x</button>
        </div>
        <div class="tray-main">
          <div class="tray-body">
            <h2 class="bar"><svg class="tri"><use href="#i-fold"/></svg>요소 정보<button class="x" aria-label="요소 정보 닫기">×</button></h2>
            <div class="info">
              <p>선택 없음</p>
              <svg class="toggle"><use href="#i-expand"/></svg>
            </div>
            <h2 class="bar"><svg class="tri"><use href="#i-fold"/></svg>재질<button class="x" aria-label="재질 닫기">×</button></h2>
            <div class="material">
              <div class="preview"><div class="diag"></div></div>
              <input class="name" type="text" value="기본값" aria-label="재질 이름" disabled>
              <div class="actions">
                <svg class="toggle"><use href="#i-collapse"/></svg>
                <svg class="create"><use href="#i-create"/></svg>
                <div class="diag small"></div>
              </div>
            </div>
            <div class="tabs">
              <button class="tab on">선택</button>
              <button class="tab">편집</button>
              <svg class="dropper"><use href="#i-dropper"/></svg>
            </div>
            <div class="finder">
              <button class="nav" aria-label="뒤로"><svg><use href="#i-prevarr"/></svg></button>
              <button class="nav" aria-label="앞으로"><svg><use href="#i-nextarr"/></svg></button>
              <button class="nav home" aria-label="모델에서"><svg><use href="#i-home"/></svg></button>
              <div class="combo"><select aria-label="모음"><option>색상</option></select><span class="arrow"><svg><use href="#i-tri"/></svg></span></div>
              <button class="nav details" aria-label="세부 정보"><svg><use href="#i-details"/></svg></button>
            </div>
            <div class="list colors">
              <div class="cells">
                <span class="cell" style="background-color: #fbcccc"></span>
                <span class="cell" style="background-color: #f99a9a"></span>
                <span class="cell" style="background-color: #f66767"></span>
                <span class="cell" style="background-color: #f33535"></span>
                <span class="cell" style="background-color: #ee0404"></span>
                <span class="cell" style="background-color: #cc0000"></span>
                <span class="cell" style="background-color: #9b0000"></span>
                <span class="cell" style="background-color: #660000"></span>
                <span class="cell" style="background-color: #fddacd"></span>
                <span class="cell" style="background-color: #f9b29a"></span>
                <span class="cell" style="background-color: #f88f67"></span>
                <span class="cell" style="background-color: #f66933"></span>
                <span class="cell" style="background-color: #f24204"></span>
                <span class="cell" style="background-color: #ce3407"></span>
                <span class="cell" style="background-color: #982607"></span>
                <span class="cell" style="background-color: #661a04"></span>
                <span class="cell" style="background-color: #fee6ce"></span>
                <span class="cell" style="background-color: #fccd99"></span>
              </div>
              <div class="scroll"><svg><use href="#i-up"/></svg><span class="thumb"></span><svg class="last"><use href="#i-down"/></svg></div>
            </div>
            <div class="divider"></div>
            <div class="caption">선택</div>
            <div class="finder">
              <button class="nav" aria-label="뒤로"><svg><use href="#i-prevarr"/></svg></button>
              <button class="nav" aria-label="앞으로"><svg><use href="#i-nextarr"/></svg></button>
              <button class="nav home" aria-label="모델에서"><svg><use href="#i-home"/></svg></button>
              <div class="combo lined"><select aria-label="모음"><option>재질</option></select><span class="arrow"><svg><use href="#i-tri"/></svg></span></div>
              <button class="nav details" aria-label="세부 정보"><svg><use href="#i-details"/></svg></button>
            </div>
            <div class="list folders">
              <div class="cells">
                <span class="cell"><svg><use href="#i-folder"/></svg></span>
                <span class="cell"><svg><use href="#i-folder"/></svg></span>
                <span class="cell"><svg><use href="#i-folder"/></svg></span>
              </div>
              <div class="scroll"><svg><use href="#i-up"/></svg><span class="thumb"></span></div>
            </div>
          </div>
          <div class="scroll outer"><svg><use href="#i-up"/></svg><span class="thumb"></span><svg class="last"><use href="#i-down"/></svg></div>
        </div>
      </aside>

      <div class="keybar"></div>
      <kbd class="key">p</kbd>
    </main>

    <footer class="status">
      <svg class="badge" viewBox="0 0 20 20"><circle cx="10" cy="10" r="8.500" fill="none" stroke="#999"/><path d="M10 4C14 4 14 9 12 11L10 17L8 11C6 9 6 4 10 4Z" fill="#888"/></svg>
      <svg class="badge" viewBox="0 0 20 20"><circle cx="10" cy="10" r="8.500" fill="#fff" stroke="#000" stroke-width="1.500"/><circle cx="10" cy="5.500" r="1.500"/><path d="M7 8H13V9.500H11.500V16H8.500V9.500H7Z"/></svg>
      <svg class="badge" viewBox="0 0 20 20"><circle cx="10" cy="10" r="8.500" fill="#e6e6e6" stroke="#999"/><circle cx="10" cy="7" r="3.500" fill="#999"/><path d="M4 15C4 10 16 10 16 15L10 18Z" fill="#999"/></svg>
      <span class="rule"></span>
      <span class="hint">밀거나 끌 면을 선택합니다. Ctrl = 새 시작 면 만들기 토글</span>
      <span class="rule"></span>
      <label for="measure">거리</label>
      <input id="measure" type="text" value="0mm">
    </footer>
  </body>
</html>
```
FILE: styles.css
```css
* {
  box-sizing: border-box;
}
body {
  margin: 0;
  height: 100vh;
  padding: 44px 0;
  display: flex;
  flex-direction: column;
  background: #fff;
  color: #111;
  font-family: "Noto Sans", "Noto Sans CJK KR", sans-serif;
  font-size: 15px;
  overflow: hidden;
}
button,
input,
select {
  font: inherit;
  color: inherit;
  margin: 0;
  padding: 0;
  border: 0;
  border-radius: 0;
  background: none;
}
svg {
  display: block;
}
.defs {
  position: absolute;
}

/* menu */
.menubar {
  display: flex;
  align-items: flex-start;
  gap: 14px;
  height: 20px;
  padding-left: 7px;
  font-size: 16px;
  line-height: 16px;
  flex: none;
}
.menubar button {
  white-space: nowrap;
}

/* top toolbars */
.toolbars {
  display: flex;
  flex: none;
  height: 48px;
  background: #f3f3f3;
  border-top: 1px solid #ececec;
  border-bottom: 1px solid #a8a8a6;
}
.toolbar {
  display: flex;
  align-items: center;
  padding-right: 2px;
  border-right: 1px solid #aaa;
}
.toolbar::before {
  content: "";
  width: 3px;
  height: 40px;
  margin: 0 2px 0 4px;
  background: repeating-linear-gradient(#b5b5b5 0 2px, transparent 2px 4px);
}
.tool {
  width: 42px;
  height: 42px;
  flex: none;
  display: flex;
  align-items: center;
  justify-content: center;
  border: 1px solid transparent;
}
.tool svg {
  width: 30px;
  height: 30px;
}
.tool.active {
  background: #c5dff5;
  border-color: #93c3ec;
}
.sep {
  width: 1px;
  height: 38px;
  margin: 0 4px 0 3px;
  background: #858585;
}
.splits {
  display: flex;
  padding-right: 1px;
}
.split {
  display: flex;
  padding-left: 4px;
}
.drop {
  width: 18px;
  display: flex;
  align-items: center;
  justify-content: center;
}
.drop svg {
  width: 12px;
  height: 12px;
}
.shadows {
  flex: 1;
}
.slider {
  width: 146px;
  margin-left: 6px;
}
.slider + .slider {
  margin-left: 15px;
}
.range {
  display: block;
  appearance: none;
  width: 100%;
  height: 9px;
  border: 1px solid #999;
  border-top: 2px solid #808080;
}
.months {
  background: linear-gradient(90deg, #fff, #f0bf20 35%, #e00c0c 68%, #fff);
}
.hours {
  background: linear-gradient(90deg, #fff, #8fb5d2 35%, #6f80f0 65%, #000);
}
.range::-webkit-slider-thumb {
  appearance: none;
  width: 5px;
  height: 13px;
  background: #f3f3f3;
  border-right: 1px solid #777;
}
.ticks {
  display: flex;
  justify-content: space-between;
  margin-top: 4px;
  color: #000;
  font-family: "Liberation Sans", "Noto Sans CJK KR", sans-serif;
  font-size: 10px;
  font-weight: 500;
  line-height: 12px;
}
.letters {
  padding: 0 3px;
}

/* work area */
.workspace {
  position: relative;
  flex: 1;
  min-height: 0;
  display: flex;
  background: #f1f1f1;
}
.side {
  width: 88px;
  flex: none;
}
.palette {
  padding: 4px 2px 1px;
  background: #f4f4f4;
  border-bottom: 1px solid #aaa;
}
.palette::before {
  content: "";
  display: block;
  height: 2px;
  margin: 0 4px 4px 1px;
  background: repeating-linear-gradient(90deg, #b5b5b5 0 2px, transparent 2px 4px);
}
.grid {
  display: grid;
  grid-template-columns: 42px 42px;
}
.grid + .grid {
  margin-top: 2px;
  padding-top: 5px;
  border-top: 1px solid #858585;
}
.viewport {
  flex: 1;
  min-width: 0;
  border-left: 2px solid #7d7d7d;
  border-top: 2px solid #6f6f6f;
  background: #cdcdcb;
}
.scene {
  width: 100%;
  height: 100%;
}
.keybar {
  position: absolute;
  left: 0;
  right: 610px;
  bottom: 0;
  height: 72px;
  background: rgba(0, 0, 0, 0.42);
}
.key {
  position: absolute;
  right: 566px;
  bottom: 8px;
  width: 31px;
  height: 46px;
  border-radius: 6px;
  background: #747474;
  color: #fff;
  font: bold 30px/44px "Noto Sans", sans-serif;
  text-align: center;
}

/* tray */
.tray {
  width: 302px;
  flex: none;
  padding-left: 6px;
  display: flex;
  flex-direction: column;
}
.tray-title {
  flex: none;
  height: 26px;
  padding: 0 4px;
  display: flex;
  align-items: center;
  background: linear-gradient(#c3d0de, #d8e5f3);
}
.tray-title span {
  flex: 1;
}
.pin {
  width: 10px;
  height: 12px;
  margin-right: 8px;
}
.tray-close {
  width: 12px;
  height: 12px;
  background: #c0504d;
  color: #fff;
  font: bold 10px/10px "Liberation Sans", sans-serif;
}
.tray-main {
  flex: 1;
  min-height: 0;
  display: flex;
  padding-top: 2px;
}
.tray-body {
  flex: 1;
  display: flex;
  flex-direction: column;
  border-right: 1px solid #fff;
}
.bar {
  flex: none;
  display: flex;
  align-items: center;
  height: 23px;
  margin: 0;
  padding: 0 3px 2px 9px;
  font-size: 16px;
  font-weight: normal;
  line-height: 18px;
  background: linear-gradient(#ebebeb, #b4b4b4);
  border-top: 1px solid #aaa;
}
.tri {
  width: 10px;
  height: 10px;
  margin-right: 9px;
}
.x {
  width: 16px;
  height: 16px;
  margin-left: auto;
  border: 1px solid #999;
  background: #e9e9e9;
  font: bold 14px/13px "Liberation Sans", sans-serif;
}
.info {
  flex: none;
  display: flex;
  justify-content: space-between;
  align-items: flex-start;
  height: 181px;
  padding: 7px 8px 0 2px;
}
.info p {
  width: 245px;
  height: 25px;
  margin: 0;
  padding-left: 9px;
  font-size: 12px;
  font-weight: bold;
  line-height: 18px;
  border-bottom: 1px solid #999;
}
.toggle {
  width: 12px;
  height: 18px;
}
.material {
  flex: none;
  display: flex;
  align-items: flex-start;
  height: 92px;
  padding: 2px 2px 0;
  border-bottom: 1px solid #999;
}
.preview {
  width: 77px;
  height: 87px;
  padding: 5px 0;
  border: 1px solid #999;
}
.diag {
  height: 75px;
  background: linear-gradient(to top right, #a6b3bc 50%, #fff 50%);
}
.small {
  width: 26px;
  height: 26px;
}
.name {
  width: 160px;
  height: 24px;
  margin-left: 3px;
  padding: 0 3px 3px;
  font-size: 12px;
  color: #808080;
  border: 1px solid #fff;
  border-top: 2px solid #808080;
  border-left: 2px solid #808080;
}
.actions {
  flex: 1;
  display: flex;
  flex-direction: column;
  align-items: center;
  gap: 10px;
  padding: 3px 0 0 3px;
}
.create {
  width: 22px;
  height: 22px;
}
.actions .small {
  margin-top: -4px;
}
.tabs {
  flex: none;
  display: flex;
  align-items: flex-start;
  padding: 8px 5px 0 0;
  height: 30px;
}
.tab {
  width: 47px;
  height: 21px;
  margin-top: 1px;
  font-size: 12px;
  line-height: 18px;
  text-align: left;
  padding-left: 5px;
  border-right: 2px solid #777;
  border-top: 1px solid #fff;
}
.tab.on {
  width: 51px;
  height: 22px;
  margin-top: 0;
  padding-left: 7px;
}
.dropper {
  width: 20px;
  height: 20px;
  margin-left: auto;
  margin-top: -2px;
}
.finder {
  flex: none;
  display: flex;
  align-items: center;
  height: 36px;
  padding: 0 5px 4px 8px;
  border-bottom: 1px solid #999;
}
.nav {
  width: 16px;
  height: 16px;
  margin-right: 12px;
}
.nav svg {
  width: 100%;
  height: 100%;
}
.nav.home {
  width: 20px;
  height: 20px;
  margin: 0 6px 0 -2px;
}
.nav.details {
  height: 20px;
  margin: 0 0 0 auto;
}
.combo {
  display: flex;
  width: 156px;
  height: 26px;
  margin-top: 7px;
  background: #fff;
  border: 1px solid #e3e3e3;
  border-top: 2px solid #777;
  border-left: 2px solid #777;
}
.combo select {
  flex: 1;
  appearance: none;
  margin: 0 4px;
  font-size: 12px;
  line-height: 20px;
}
.lined select {
  border-bottom: 1px solid #000;
}
.arrow {
  width: 21px;
  display: flex;
  align-items: center;
  justify-content: center;
  background: #f0f0f0;
  border: 1px solid #f9f9f9;
  border-right: 2px solid #777;
  border-bottom: 2px solid #777;
}
.arrow svg {
  width: 10px;
  height: 10px;
}
.list {
  display: flex;
  overflow: hidden;
  background: #fff;
}
.colors {
  flex: 1;
  min-height: 0;
}
.folders {
  flex: none;
  height: 33px;
}
.cells {
  flex: 1;
  display: grid;
  grid-template-columns: repeat(3, 62px);
  grid-auto-rows: 62px;
  gap: 2px;
  padding: 2px 3px;
}
.cell {
  border: 1px solid #999;
  padding: 1px;
  background-clip: content-box;
}
.folders svg {
  width: 38px;
  height: 30px;
  margin: 11px;
}
.scroll {
  width: 20px;
  display: flex;
  flex-direction: column;
  align-items: center;
  padding: 6px 0;
  background: #f1f1f1;
}
.scroll svg {
  flex: none;
  width: 10px;
  height: 10px;
  margin: 0;
}
.thumb {
  flex: none;
  width: 19px;
  height: 21px;
  margin-top: 5px;
  background: #cdcdcd;
}
.folders .scroll {
  padding-top: 5px;
}
.scroll .last {
  margin-top: auto;
}
.divider {
  flex: none;
  height: 9px;
  border-top: 3px solid #f1f1f1;
  border-bottom: 4px solid #f6f6f6;
  background: #777;
}
.caption {
  flex: none;
  height: 23px;
  padding-left: 4px;
  font-size: 12px;
  line-height: 21px;
  background: #e3e3e3;
  border-top: 1px solid #999;
  border-bottom: 1px solid #999;
}

/* status bar */
.status {
  flex: none;
  display: flex;
  align-items: center;
  height: 27px;
  padding: 0 5px;
  background: #f1f1f1;
  font-size: 16px;
}
.badge {
  width: 20px;
  height: 20px;
  margin: 6px 15px 0 0;
}
.rule {
  width: 1px;
  height: 15px;
  margin: 6px 10px 0 -3px;
  background: #888;
}
.hint {
  flex: 1;
  margin-top: 6px;
  font-size: 17px;
  line-height: 20px;
}
.status label {
  margin-top: 6px;
  line-height: 20px;
}
.status input {
  width: 250px;
  height: 24px;
  margin: 3px 0 0 10px;
  padding: 5px 2px 0;
  border: 1px solid #b4c3d3;
  border-bottom: 0;
}
```
